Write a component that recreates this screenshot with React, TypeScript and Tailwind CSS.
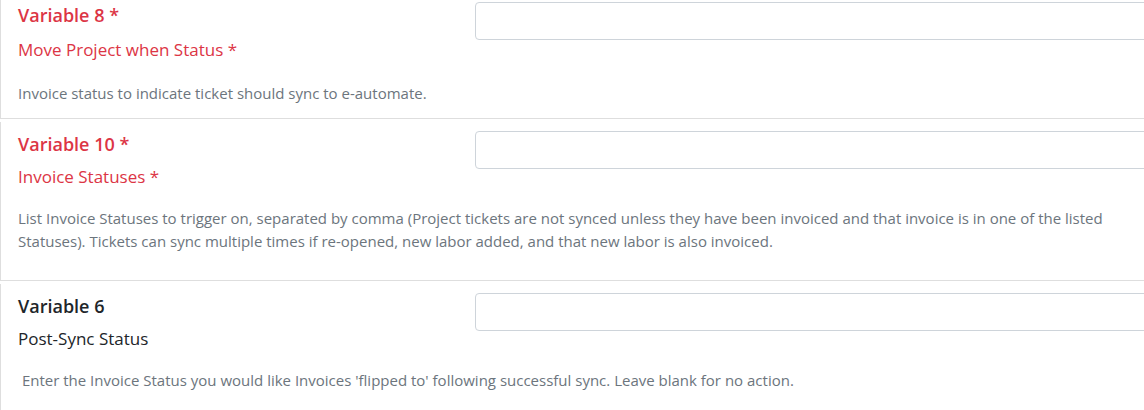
import React from 'react';

type Field = {
  id: string;
  title: string;
  label: string;
  help: string;
  required: boolean;
  top: string;
  labelGap: string;
  gap: string;
  bottom: string;
};

const fields: Field[] = [
  {
    id: 'var8',
    title: 'Variable 8',
    label: 'Move Project when Status',
    help: 'Invoice status to indicate ticket should sync to e-automate.',
    required: true,
    top: 'pt-[4px]',
    labelGap: 'mt-[11px]',
    gap: 'mt-[20px]',
    bottom: 'pb-[13px]',
  },
  {
    id: 'var10',
    title: 'Variable 10',
    label: 'Invoice Statuses',
    help: 'List Invoice Statuses to trigger on, separated by comma (Project tickets are not synced unless they have been invoiced and that invoice is in one of the listed Statuses). Tickets can sync multiple times if re-opened, new labor added, and that new labor is also invoiced.',
    required: true,
    top: 'pt-[11px]',
    labelGap: 'mt-[9px]',
    gap: 'mt-[18px]',
    bottom: 'pb-[27px]',
  },
  {
    id: 'var6',
    title: 'Variable 6',
    label: 'Post-Sync Status',
    help: "\u00a0Enter the Invoice Status you would like Invoices 'flipped to' following successful sync. Leave blank for no action.",
    required: false,
    top: 'pt-[11px]',
    labelGap: 'mt-[9px]',
    gap: 'mt-[18px]',
    bottom: 'pb-[20px]',
  },
];

function FieldCard({ field, first }: { field: Field; first: boolean }) {
  const tone = field.required ? 'text-[#dc3545]' : 'text-[#212529]';
  return (
    <div
      className={`${first ? '' : 'mt-[3px]'} border-l border-b border-[#dedede] px-[17px] ${field.top} ${field.bottom}`}
    >
      <div className="flex">
        <div className="w-[457px] shrink-0">
          <div className={`text-[18px] leading-[23px] font-semibold ${tone}`}>
            {field.title}
            {field.required && ' *'}
          </div>
          <div className={`${field.labelGap} text-[17px] leading-6 ${tone}`}>
            {field.label}
            {field.required && ' *'}
          </div>
        </div>
        <input
          type="text"
          className="-mt-[2px] h-[38px] flex-1 rounded border border-[#ced4da] bg-white px-3 outline-none"
        />
      </div>
      <p className={`${field.gap} max-w-[1100px] text-[15px] leading-[23px] text-[#6c757d]`}>
        {field.help}
      </p>
    </div>
  );
}

export default function App() {
  return (
    <div className="w-screen overflow-hidden bg-white" style={{ fontFamily: '"Open Sans", "Noto Sans", sans-serif' }}>
      <div className="w-[1180px]">
        {fields.map((f, i) => (
          <FieldCard key={f.id} field={f} first={i === 0} />
        ))}
      </div>
    </div>
  );
}
